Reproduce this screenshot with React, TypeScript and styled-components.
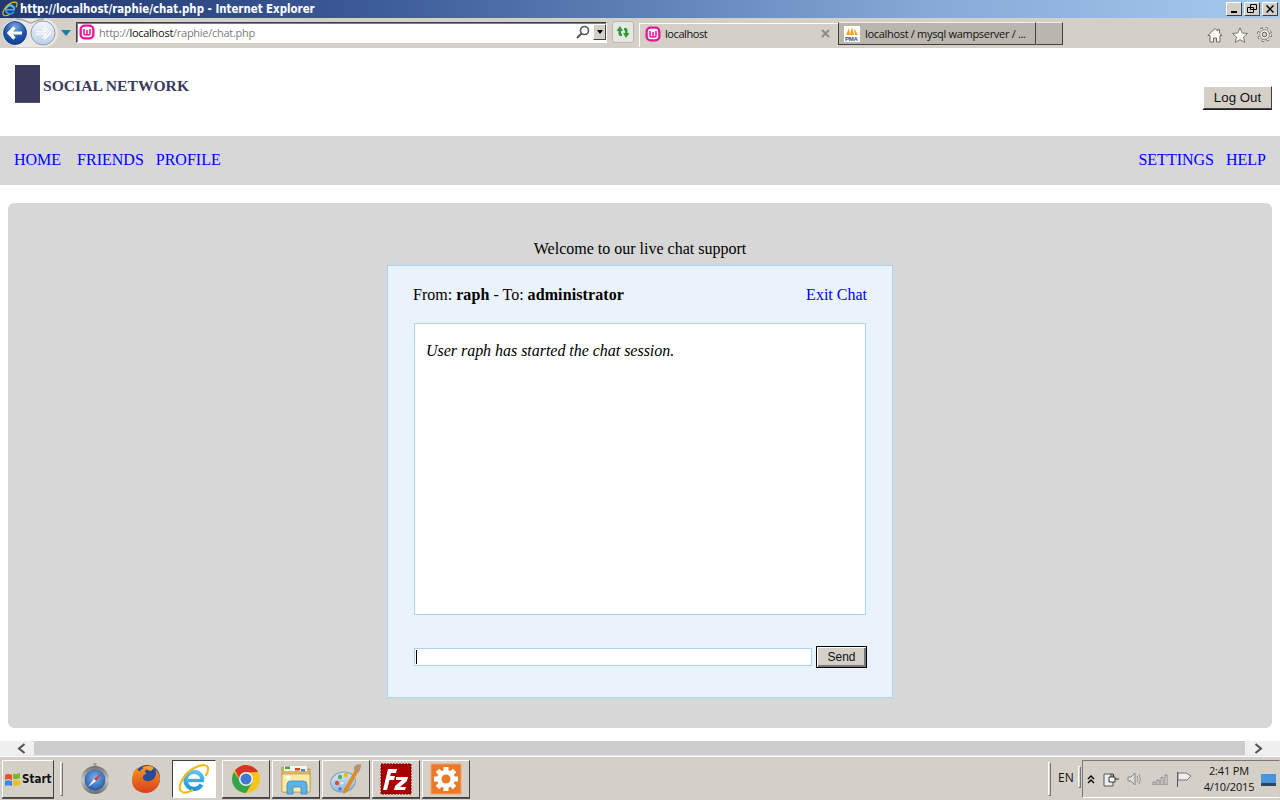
import React from "react";
import styled, { createGlobalStyle } from "styled-components";

const Global = createGlobalStyle`
  html, body { margin: 0; padding: 0; height: 100%; overflow: hidden; background: #fff; }
  #root { width: 1280px; height: 800px; }
  * { box-sizing: border-box; }
`;

const Screen = styled.div`
  width: 1280px; height: 800px; display: flex; flex-direction: column; overflow: hidden;
  font-family: "Liberation Serif", "Times New Roman", serif; background: #fff;
`;
const TitleBar = styled.div`
  height: 18px; flex: none; display: flex; align-items: center;
  background: linear-gradient(90deg, #21386f 0%, #3d5c9a 30%, #5f80b6 50%, #86a8d6 72%, #a6caee 100%);
  padding: 0 2px;
`;
const TitleText = styled.span`
  font: bold 11.4px "DejaVu Sans Condensed", "DejaVu Sans", Verdana, sans-serif; font-stretch: condensed; color: #fff; margin-left: 2px; white-space: nowrap;
  flex: 1;
`;
const WinButtons = styled.div`display: flex; gap: 2px; margin-top: -1px;`;
const WinButton = styled.div`
  width: 16px; height: 14px; background: #d4d0c8; display: flex; align-items: center; justify-content: center;
  border: 1px solid; border-color: #fff #404040 #404040 #fff;
`;
const ToolBar = styled.div`
  height: 30px; flex: none; background: #d4d0c8; display: flex; align-items: center; position: relative;
`;
const NavGroup = styled.div`display: flex; align-items: center; width: 76px; padding-left: 2px; flex: none;`;
const AddressBox = styled.div`
  width: 531px; height: 21px; background: #fff; display: flex; align-items: center; flex: none;
  border: 1px solid; border-color: #404040 #fff #fff #404040; box-shadow: inset 1px 1px 0 #808080; padding-left: 2px; margin-top: -2px;
`;
const UrlText = styled.span`
  font: 11px "Open Sans", "DejaVu Sans", sans-serif; color: #7c7c7c; margin-left: 4px; flex: 1; letter-spacing: -0.27px; padding-top: 1px;
  b { font-weight: 400; color: #111; }
`;
const ComboArrow = styled.div`
  width: 13px; height: 16px; margin: 0 0 0 3px; background: #d4d0c8; border: 1px solid; border-color: #fff #404040 #404040 #fff;
  display: flex; align-items: center; justify-content: center;
  &::after { content: ""; border-left: 3.5px solid transparent; border-right: 3.5px solid transparent; border-top: 4px solid #000; }
`;
const RefreshBox = styled.div`
  width: 22px; height: 22px; margin-left: 5px; margin-top: -2px; border: 1px solid #b9b9b3; border-radius: 3px; background: #e8e6e0;
  display: flex; align-items: center; justify-content: center; flex: none;
`;
const ActiveTab = styled.div`
  width: 199px; height: 24px; margin-left: 5px; flex: none; display: flex; align-items: center; padding: 0 8px 4px 5px;
  border-top: 1px solid #fff; border-left: 1px solid #fff; align-self: flex-start; margin-top: 5px;
  font: 11px "Open Sans", "DejaVu Sans", sans-serif; color: #111; letter-spacing: -0.42px;
  span { margin-left: 4px; flex: 1; }
`;
const Tab = styled.div`
  width: 198px; height: 23px; flex: none; display: flex; align-items: center; padding: 0 0 0 5px; align-self: flex-start; margin-top: 4px;
  background: #bab6ae; border: 1px solid; border-color: #eee #404040 #404040 #404040;
  font: 11px "Open Sans", "DejaVu Sans", sans-serif; color: #111; letter-spacing: -0.31px; white-space: nowrap;
  span { margin-left: 5px; }
`;
const NewTab = styled.div`
  width: 27px; height: 23px; flex: none; align-self: flex-start; margin-top: 4px; background: #bab6ae;
  border: 1px solid; border-color: #eee #404040 #404040 #bab6ae;
`;
const ToolIcons = styled.div`
  margin-left: auto; margin-right: 8px; display: flex; gap: 9px; align-items: center; margin-top: 3px;
`;
const Page = styled.div`height: 693px; flex: none; display: flex; flex-direction: column; background: #fff;`;
const Header = styled.div`height: 88px; flex: none; display: flex; padding: 17px 8px 0 15px;`;
const LogoMark = styled.div`width: 25px; height: 38px; background: #3a3a5f; border-bottom: 1px solid #55557a; flex: none;`;
const Brand = styled.div`
  margin-left: 3px; margin-top: 12px; font: bold 15.6px "Liberation Serif", serif; color: #3a3a5f; white-space: nowrap;
`;
const LogOut = styled.div`
  margin-left: auto; margin-top: 21px; width: 69px; height: 23px; background: #d4d0c8;
  font: 13.3px "Liberation Sans", Arial, sans-serif; color: #111; display: flex; align-items: center; justify-content: center;
  border: 1px solid; border-color: #fff #404040 #404040 #fff; box-shadow: 0 1px 0 #222;
`;
const NavBar = styled.nav`
  height: 49px; flex: none; background: #d7d7d7; display: flex; align-items: center; padding: 0 14px 2px; font-size: 16px;
`;
const NavLink = styled.a<{ $gap?: number }>`
  color: #0000ff; text-decoration: none; margin-right: ${(p) => p.$gap ?? 0}px; white-space: nowrap;
`;
const Spacer = styled.div`flex: 1;`;
const Main = styled.main`
  margin: 18px 8px 0; height: 525px; background: #d7d7d7; border-radius: 6px; padding-top: 37px;
  display: flex; flex-direction: column; align-items: center; font-size: 16px; color: #000;
`;
const Welcome = styled.div`height: 18px; line-height: 18px; margin-bottom: 7px; text-align: center;`;
const ChatBox = styled.div`
  width: 506px; height: 433px; background: #eaf3fb; border: 1px solid #a8d8f0; padding: 19px 25px 0 25px;
  display: flex; flex-direction: column;
`;
const ChatHead = styled.div`
  display: flex; justify-content: space-between; height: 18px; line-height: 19px; margin-bottom: 20px;
  b { letter-spacing: 0.1px; }
`;
const ExitLink = styled.a`color: #0000ff; text-decoration: none;`;
const ChatLog = styled.div`
  width: 452px; height: 292px; margin-left: 1px; background: #fff; border: 1px solid #a8d8f0; padding: 17px 11px; font-style: italic; line-height: 19px; flex: none; letter-spacing: -0.03px;
`;
const SendRow = styled.div`display: flex; align-items: center; margin-top: 31px; margin-left: 1px;`;
const MsgInput = styled.div`
  width: 398px; height: 18px; background: #fff; border: 1px solid #a8d8f0; padding: 1px;
  &::before { content: ""; display: block; width: 1px; height: 14px; background: #000; }
`;
const SendButton = styled.div`
  width: 51px; height: 22px; margin-left: 4px; background: #d4d0c8; border: 1px solid #000; box-shadow: inset 1px 1px 0 #fff, inset -2px -2px 0 #777;
  font: 12px "Liberation Sans", Arial, sans-serif; color: #111; display: flex; align-items: center; justify-content: center;
`;
const ScrollBar = styled.div`height: 15px; flex: none; display: flex; background: #f0f0f0; border-bottom: 1px solid #e8e8e8;`;
const ScrollBtn = styled.div`width: 34px; display: flex; align-items: center; justify-content: flex-end; padding-right: 8px;`;
const ScrollBtnRight = styled(ScrollBtn)`width: 35px; justify-content: flex-start; padding: 0 0 0 9px;`;
const ScrollThumb = styled.div`flex: 1; background: #cdcdcd;`;
const Taskbar = styled.div`
  height: 44px; flex: none; background: #d4d0c8; border-top: 1px solid #fff; display: flex; align-items: flex-start; padding: 3px 0 0 2px;
`;
const StartBtn = styled.div`
  width: 52px; height: 38px; display: flex; align-items: center; padding-left: 1px; font: bold 11.5px "DejaVu Sans Condensed", "DejaVu Sans", Verdana, sans-serif; font-stretch: condensed; color: #111;
  border: 1px solid; border-color: #fff #404040 #404040 #fff; box-shadow: 0 1px 0 #555; gap: 1px; flex: none;
`;
const VSep = styled.div<{ $ml: number; $h?: number; $mt?: number }>`
  width: 3px; height: ${(p) => p.$h ?? 34}px; margin-left: ${(p) => p.$ml}px; margin-top: ${(p) => p.$mt ?? 2}px; border: 1px solid; border-color: #fff #777 #777 #fff; flex: none; background: #d4d0c8;
`;
const TaskSlot = styled.div<{ $w: number; $ml?: number; $mode?: string }>`
  width: ${(p) => p.$w}px; height: 38px; margin-left: ${(p) => p.$ml ?? 0}px; flex: none; display: flex; align-items: center; justify-content: center;
  ${(p) => p.$mode === "btn" && "border: 1px solid; border-color: #fff #404040 #404040 #fff; box-shadow: 0 1px 0 #555;"}
  ${(p) => p.$mode === "active" && "border: 1px solid; border-color: #404040 #fff #fff #404040; background: #fff;"}
`;
const Lang = styled.span`font: 12px/36px "Open Sans", "DejaVu Sans", sans-serif; color: #111; margin-left: 7px; width: 20px; flex: none;`;
const Tray = styled.div`
  width: 198px; height: 38px; margin-left: 1px; flex: none; border: 1px solid; border-color: #777 #d4d0c8 #fff #777; display: flex; align-items: center; padding-left: 4px;
`;
const TrayIcons = styled.div`display: flex; align-items: center; gap: 8px; flex: none;`;
const Clock = styled.div`
  width: 62px; margin-left: 5px; margin-top: -1px; text-align: center; font: 11px/16px "Open Sans", "DejaVu Sans", sans-serif; color: #111; flex: none; letter-spacing: -0.15px;
`;

const WampIcon = ({ s = 16 }: { s?: number }) => (
  <svg width={s} height={s} viewBox="0 0 16 16" style={{ flex: "none" }}>
    <rect x="0.5" y="0.5" width="15" height="15" rx="5" fill="#f0109a" />
    <rect x="2.8" y="2.8" width="10.4" height="10.4" rx="3" fill="#fff" />
    <path d="M5 5v4.500c0 2 2.400 2 3 .4c.6 1.600 3 1.600 3-.4V5M8 6v3.500" fill="none" stroke="#f0109a" strokeWidth="1.5" />
  </svg>
);
const IeIcon = ({ s = 30, id }: { s?: number; id: string }) => (
  <svg width={s} height={s} viewBox="0 0 32 32" style={{ flex: "none" }}>
    <defs>
      <linearGradient id={id} gradientUnits="userSpaceOnUse" x1="0" y1="6" x2="0" y2="28"><stop offset="0" stopColor="#62cbf3" /><stop offset="1" stopColor="#1a8fd8" /></linearGradient>
    </defs>
    <path d="M23.500 21.500A8.500 8.500 0 1 1 24.500 16.500" fill="none" stroke={`url(#${id})`} strokeWidth="4.200" />
    <path d="M10 17.500h16" stroke={`url(#${id})`} strokeWidth="3.400" />
    <path d="M3 28C-1 24 6 10 16 5C24 1 31 1 30 7C30 9 29 11 27.500 13M3 28C5 31 11 29 15 27" fill="none" stroke="#f4bb1c" strokeWidth="2.200" />
  </svg>
);
const NavPill = () => (
  <svg width="56" height="30" viewBox="0 0 56 30" style={{ flex: "none" }}>
    <defs>
      <radialGradient id="bk" cx="50%" cy="25%" r="80%"><stop offset="0" stopColor="#7ea6dc" /><stop offset="0.55" stopColor="#1f57ad" /><stop offset="1" stopColor="#0b3a8c" /></radialGradient>
      <linearGradient id="fw" x1="0" y1="0" x2="0" y2="1"><stop offset="0" stopColor="#f2f6fb" /><stop offset="1" stopColor="#bcd0e6" /></linearGradient>
    </defs>
    <path d="M14 1h28a13.500 13.500 0 0 1 0 28H14z" fill="#e9e7e2" />
    <path d="M14 1c10 0 12 4 15 4s5-4 13-4" fill="none" stroke="#a9a9a9" strokeWidth="1.500" />
    <circle cx="13" cy="15" r="12.500" fill="#eef3f9" />
    <circle cx="13" cy="15" r="11.500" fill="url(#bk)" stroke="#123f86" strokeWidth="0.800" />
    <path d="M20 15H8M12.500 9.500L7 15l5.500 5.500" fill="none" stroke="#fff" strokeWidth="3.200" />
    <circle cx="41" cy="15" r="12" fill="url(#fw)" stroke="#8f9fb2" />
    <path d="M34 15h12M41.500 9.500L47 15l-5.500 5.500" fill="none" stroke="#fff" strokeWidth="3.400" />
    <path d="M34 15h12M41.500 9.500L47 15l-5.500 5.500" fill="none" stroke="#a8b6c6" strokeWidth="0.500" />
  </svg>
);
const Compass = () => (
  <svg width="30" height="32" viewBox="0 0 30 32">
    <defs>
      <radialGradient id="sf" cx="50%" cy="40%" r="60%"><stop offset="0" stopColor="#7fb2ea" /><stop offset="1" stopColor="#2358a8" /></radialGradient>
      <linearGradient id="sr" x1="0" y1="0" x2="0" y2="1"><stop offset="0" stopColor="#6e6e6e" /><stop offset="0.5" stopColor="#c8c8c8" /><stop offset="1" stopColor="#6a6a6a" /></linearGradient>
    </defs>
    <rect x="13.500" y="0" width="3" height="4" fill="#9a9a9a" />
    <circle cx="15" cy="17" r="14" fill="url(#sr)" />
    <circle cx="15" cy="17" r="10.500" fill="url(#sf)" />
    <path d="M22 10L14 16l2 2z" fill="#e33" /><path d="M8 24l8-6-2-2z" fill="#fff" />
  </svg>
);
const Firefox = () => (
  <svg width="32" height="32" viewBox="0 0 32 32">
    <defs><linearGradient id="ff" x1="0" y1="0" x2="0" y2="1"><stop offset="0" stopColor="#f5941e" /><stop offset="1" stopColor="#d9401e" /></linearGradient></defs>
    <circle cx="17" cy="15" r="13" fill="#274b98" />
    <path d="M12 5c3-3 9-3 12 0l-3 3z" fill="#f0a61c" />
    <path d="M2 18C2 11 4 7 8 4c-1 3 0 4 2 4 2-2 4-4 8-3-2 1-3 3-3 4 2 1 1 2-1 3-2 2-1 5 2 6 4 1 9-1 10-7 0-2 0-3-1-5 3 3 5 6 5 10 0 8-7 14-14 14-8 0-14-5-14-12z" fill="url(#ff)" />
  </svg>
);
const Chrome = () => (
  <svg width="30" height="30" viewBox="0 0 30 30">
    <circle cx="15" cy="15" r="14" fill="#f6c51c" />
    <path d="M2.900 8A14 14 0 0 0 15 29l6.500-11-6 2-6-3z" fill="#35a24c" />
    <path d="M27.100 8A14 14 0 0 0 4 6.300L9.500 17 11 10l4-1.500z" fill="#d8352a" />
    <circle cx="15" cy="15" r="7" fill="#f2f2f2" /><circle cx="15" cy="15" r="5.500" fill="#3f7ad2" />
  </svg>
);
const Folder = () => (
  <svg width="32" height="32" viewBox="0 0 32 32">
    <path d="M2 4h10l2 2h16v23H2z" fill="#d9b860" stroke="#b2965a" />
    <rect x="4" y="3" width="23" height="5" fill="#f6f6f2" />
    <rect x="5" y="3.500" width="5" height="2.500" fill="#2fae3c" /><rect x="15" y="5" width="5" height="2.500" fill="#d8402a" /><rect x="21" y="6" width="4" height="2.500" fill="#2f8be0" />
    <path d="M2 11h28v18H2z" fill="#fbeaa6" stroke="#c8ac66" />
    <path d="M5 15l3 2 3-2-3-3z" fill="#fff" />
    <path d="M7 31v-9q0-4 4-4h12q4 0 4 4v9h-6v-7H13v7z" fill="#5fb2e6" stroke="#3a86bc" strokeWidth="0.800" />
  </svg>
);
const Palette = () => (
  <svg width="32" height="32" viewBox="0 0 32 32">
    <defs><linearGradient id="pl" x1="0" y1="0" x2="0" y2="1"><stop offset="0" stopColor="#d6e6f4" /><stop offset="1" stopColor="#8fb8de" /></linearGradient></defs>
    <ellipse cx="13" cy="19" rx="12.500" ry="10" fill="url(#pl)" stroke="#7f9cbc" transform="rotate(-10 13 19)" />
    <circle cx="7" cy="20" r="2.200" fill="#e04a3a" /><circle cx="10" cy="14" r="2.200" fill="#5ab04a" />
    <circle cx="16" cy="12" r="2.200" fill="#e8b820" /><circle cx="12" cy="20" r="2.200" fill="#dfe8f0" stroke="#8fa8c0" strokeWidth="0.600" /><circle cx="10" cy="26" r="1.800" fill="#4a7ad8" />
    <path d="M25 7l3 2-11 20-4 2 1-5z" fill="#e08a20" /><path d="M24 4q2-3 7-3 0 6-3 9l-4-3z" fill="#b89468" />
  </svg>
);
const FileZilla = () => (
  <svg width="32" height="32" viewBox="0 0 32 32">
    <rect x="1" y="1" width="30" height="30" fill="#a80000" stroke="#700" strokeDasharray="2 1" />
    <path d="M8 6h9l-1 4h-5l-.8 3H15l-1 4h-4.500L7 27H3z" fill="#fff" />
    <path d="M16 14h12l-1 4-7 6h6l-1 3H14l1-4 7-6h-6z" fill="#fff" />
  </svg>
);
const GearOrange = () => (
  <svg width="32" height="32" viewBox="0 0 32 32">
    <rect x="1" y="1" width="30" height="30" fill="#ea7a28" stroke="#f2a468" />
    <path d="M16 4v24M4 16h24M7.500 7.500l17 17M24.500 7.500l-17 17" stroke="#fff" strokeWidth="5" />
    <circle cx="16" cy="16" r="9" fill="#fff" /><circle cx="16" cy="16" r="4.500" fill="#ea7a28" />
  </svg>
);
const WinFlag = () => (
  <svg width="17" height="16" viewBox="0 0 17 16" style={{ flex: "none" }}>
    <path d="M1 4q3-2 7 0v5q-4-2-7 0z" fill="#e8502a" /><path d="M9 2.500q3 1.500 7-.5v5q-4 2-7 .5z" fill="#7ab92a" />
    <path d="M1 10q3-1.500 7 0v5q-4-1.500-7 0z" fill="#3a8ae0" /><path d="M9 9q3 1.500 7 0v5q-4 1.500-7 0z" fill="#f2bd1a" />
  </svg>
);

export default function App() {
  return (
    <Screen>
      <Global />
      <TitleBar>
        <IeIcon s={16} id="ie1" />
        <TitleText>http://localhost/raphie/chat.php - Internet Explorer</TitleText>
        <WinButtons>
          <WinButton><svg width="8" height="8"><rect x="1" y="6" width="6" height="2" /></svg></WinButton>
          <WinButton><svg width="10" height="9"><path d="M3.500.5h6v5h-6zM.5 3.500h6v5h-6z" fill="#d4d0c8" stroke="#000" /></svg></WinButton>
          <WinButton><svg width="8" height="8"><path d="M.5.500l7 7M7.500.5l-7 7" stroke="#000" strokeWidth="1.500" /></svg></WinButton>
        </WinButtons>
      </TitleBar>
      <ToolBar>
        <NavGroup>
          <NavPill />
          <svg width="10" height="6" style={{ marginLeft: 3, flex: "none" }}><path d="M0 0h10L5 6z" fill="#1c7ea8" /></svg>
        </NavGroup>
        <AddressBox>
          <WampIcon />
          <UrlText>http://<b>localhost</b>/raphie/chat.php</UrlText>
          <svg width="14" height="14" viewBox="0 0 14 14"><circle cx="8.500" cy="5.500" r="4" fill="none" stroke="#555" strokeWidth="1.600" /><path d="M5.500 8.500L1 13" stroke="#555" strokeWidth="2" /></svg>
          <ComboArrow />
        </AddressBox>
        <RefreshBox>
          <svg width="16" height="16" viewBox="0 0 16 16"><path d="M5 2L1.500 7h2v3q0 2 2 2h1.500v-2.500H6V7h2zM11 14l3.500-5h-2V6q0-2-2-2H9v2.500h1V9H8z" fill="#2c9a3c" /></svg>
        </RefreshBox>
        <ActiveTab>
          <WampIcon />
          <span>localhost</span>
          <svg width="9" height="9"><path d="M1 1l7 7M8 1l-7 7" stroke="#8c8c8c" strokeWidth="2" /></svg>
        </ActiveTab>
        <Tab>
          <svg width="16" height="16" viewBox="0 0 16 16" style={{ flex: "none" }}>
            <rect width="16" height="16" fill="#fff" />
            <path d="M2 9l3-7 1 7zM6 9l2-8 2 8zM11 9l-1-7 4 7z" fill="#f0a020" />
            <text x="1" y="15" fontSize="6" fontWeight="700" fill="#2a4a8a" fontFamily="Liberation Sans">PMA</text>
          </svg>
          <span>localhost / mysql wampserver / ...</span>
        </Tab>
        <NewTab />
        <ToolIcons>
          <svg width="16" height="16" viewBox="0 0 16 16"><path d="M8 1.500L.8 8.500h2.200v6.500h3.500v-4h3v4H13V8.500h2.200L12.500 6V2.500h-2V4z" fill="#f7f7f4" stroke="#6c6c68" /></svg>
          <svg width="16" height="16" viewBox="0 0 18 17"><path d="M9 .5l2.500 5.700 6 .6-4.500 4 1.300 6L9 13.700l-5.300 3.100 1.300-6-4.500-4 6-.6z" fill="#f7f7f4" stroke="#6c6c68" /></svg>
          <svg width="15" height="15" viewBox="0 0 15 15">
            <circle cx="7.500" cy="7.500" r="5.700" fill="none" stroke="#5c5c58" strokeWidth="3.400" strokeDasharray="2.240 2.240" />
            <circle cx="7.500" cy="7.500" r="5.700" fill="none" stroke="#f7f7f4" strokeWidth="2" strokeDasharray="1.800 2.680" />
            <circle cx="7.500" cy="7.500" r="4.800" fill="#f7f7f4" stroke="#5c5c58" strokeWidth="0.700" />
            <circle cx="7.500" cy="7.500" r="2.300" fill="#d4d0c8" stroke="#5c5c58" />
          </svg>
        </ToolIcons>
      </ToolBar>
      <Page>
        <Header>
          <LogoMark />
          <Brand>SOCIAL NETWORK</Brand>
          <LogOut>Log Out</LogOut>
        </Header>
        <NavBar>
          <NavLink $gap={16}>HOME</NavLink>
          <NavLink $gap={12}>FRIENDS</NavLink>
          <NavLink>PROFILE</NavLink>
          <Spacer />
          <NavLink $gap={12}>SETTINGS</NavLink>
          <NavLink>HELP</NavLink>
        </NavBar>
        <Main>
          <Welcome>Welcome to our live chat support</Welcome>
          <ChatBox>
            <ChatHead>
              <span>From: <b>raph</b> - To: <b>administrator</b></span>
              <ExitLink>Exit Chat</ExitLink>
            </ChatHead>
            <ChatLog>User raph has started the chat session.</ChatLog>
            <SendRow>
              <MsgInput />
              <SendButton>Send</SendButton>
            </SendRow>
          </ChatBox>
        </Main>
      </Page>
      <ScrollBar>
        <ScrollBtn><svg width="9" height="11"><path d="M7.500 1L2 5.500 7.500 10" fill="none" stroke="#505050" strokeWidth="2" /></svg></ScrollBtn>
        <ScrollThumb />
        <ScrollBtnRight><svg width="9" height="11"><path d="M1.500 1L7 5.500 1.500 10" fill="none" stroke="#505050" strokeWidth="2" /></svg></ScrollBtnRight>
      </ScrollBar>
      <Taskbar>
        <StartBtn><WinFlag />Start</StartBtn>
        <VSep $ml={6} />
        <TaskSlot $w={48} $ml={8}><Compass /></TaskSlot>
        <TaskSlot $w={50} $ml={2}><Firefox /></TaskSlot>
        <TaskSlot $w={44} $ml={1} $mode="active"><IeIcon s={32} id="ie2" /></TaskSlot>
        <TaskSlot $w={48} $ml={6} $mode="btn"><Chrome /></TaskSlot>
        <TaskSlot $w={48} $ml={2} $mode="btn"><Folder /></TaskSlot>
        <TaskSlot $w={48} $ml={2} $mode="btn"><Palette /></TaskSlot>
        <TaskSlot $w={48} $ml={2} $mode="btn"><FileZilla /></TaskSlot>
        <TaskSlot $w={48} $ml={2} $mode="btn"><GearOrange /></TaskSlot>
        <Spacer />
        <VSep $ml={0} />
        <Lang>EN</Lang>
        <VSep $ml={0} $h={22} $mt={6} />
        <Tray>
          <TrayIcons>
            <svg width="8" height="9"><path d="M1 4l3-3 3 3M1 8l3-3 3 3" fill="none" stroke="#000" strokeWidth="1.400" /></svg>
            <svg width="16" height="16" viewBox="0 0 16 16"><path d="M1 3h9v12H1z" fill="#eee" stroke="#555" /><path d="M6 6h6v5H6zM12 8h4M8 3v3M10.500 3v3" fill="#fff" stroke="#333" /></svg>
            <svg width="16" height="14" viewBox="0 0 16 14"><path d="M1 5h3l4-4v12l-4-4H1z" fill="#ddd" stroke="#888" /><path d="M10 4q2 3 0 6M12 2q3 5 0 10" fill="none" stroke="#999" /></svg>
            <svg width="16" height="12" viewBox="0 0 16 12" style={{ marginLeft: 1 }}><path d="M1 9h2v3H1zM5 7h2v5H5zM9 4.500h2V12H9zM13 2h2v10h-2z" fill="#eee" stroke="#666" strokeWidth="0.700" /></svg>
            <svg width="17" height="15" viewBox="0 0 17 15"><path d="M1.500 0v15" stroke="#555" /><path d="M2 1h8l5 3-4 4H2z" fill="#eee" stroke="#777" /></svg>
          </TrayIcons>
          <Clock>2:41 PM<br />4/10/2015</Clock>
          <svg width="15" height="13" viewBox="0 0 15 13" style={{ marginLeft: 1, marginTop: 3, flex: "none" }}><rect width="15" height="9" fill="#4a94dc" /><rect y="9" width="15" height="3" fill="#30465c" /></svg>
        </Tray>
      </Taskbar>
    </Screen>
  );
}
